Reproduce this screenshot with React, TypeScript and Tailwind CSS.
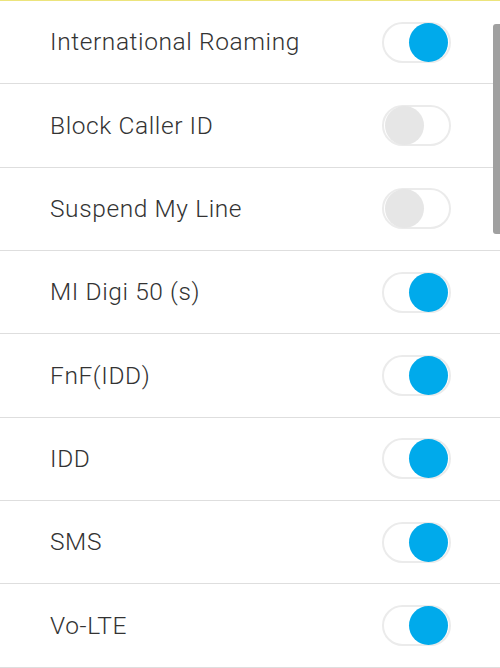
const rows = [
  { label: "International Roaming", on: true },
  { label: "Block Caller ID", on: false },
  { label: "Suspend My Line", on: false },
  { label: "MI Digi 50 (s)", on: true },
  { label: "FnF(IDD)", on: true },
  { label: "IDD", on: true },
  { label: "SMS", on: true },
  { label: "Vo-LTE", on: true },
];

function Toggle({ on }: { on: boolean }) {
  return (
    <div className="w-[69px] h-[41px] rounded-full border-2 border-[#ebebeb] bg-white flex items-center px-[1px]">
      <div
        className={`w-[39px] h-[39px] rounded-full ${on ? "ml-auto bg-[#00aaeb]" : "bg-[#e6e6e6]"}`}
      />
    </div>
  );
}

export default function App() {
  return (
    <div className="relative w-[500px] h-[668px] bg-white overflow-hidden border-t border-[#ece47c] font-['Roboto',sans-serif]">
      {rows.map((row) => (
        <div
          key={row.label}
          className="h-[83.35px] flex items-center justify-between pl-[50px] pr-[49px] border-b border-[#dedede]"
        >
          <span className="text-[24.5px] font-light text-[#333333] tracking-[0.6px] pt-[1px]">{row.label}</span>
          <Toggle on={row.on} />
        </div>
      ))}
      <div className="absolute right-0 top-[23px] w-[7px] h-[210px] bg-[#a0a0a0] rounded-l-[3px]" />
    </div>
  );
}
